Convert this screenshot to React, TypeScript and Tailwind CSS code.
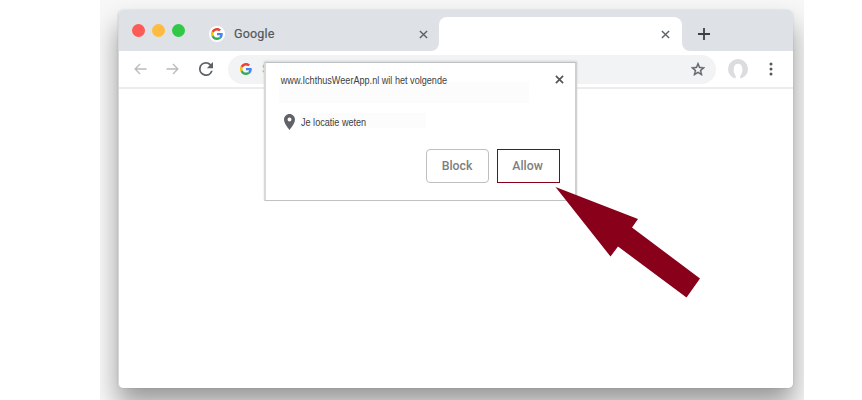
import React from "react";

function GoogleG({ className }: { className: string }) {
  return (
    <svg viewBox="0 0 48 48" className={className}>
      <path fill="#ea4335" d="M24 9.5c3.54 0 6.71 1.22 9.21 3.6l6.85-6.85C35.9 2.38 30.47 0 24 0 14.62 0 6.51 5.38 2.56 13.22l7.98 6.19C12.43 13.72 17.74 9.5 24 9.5z" />
      <path fill="#4285f4" d="M46.98 24.55c0-1.57-.15-3.09-.38-4.55H24v9.02h12.94c-.58 2.96-2.26 5.48-4.78 7.18l7.73 6c4.51-4.18 7.09-10.36 7.09-17.65z" />
      <path fill="#fbbc05" d="M10.53 28.59c-.48-1.45-.76-2.99-.76-4.59s.27-3.14.76-4.59l-7.98-6.19C.92 16.46 0 20.12 0 24s.92 7.54 2.56 10.78l7.97-6.19z" />
      <path fill="#34a853" d="M24 48c6.48 0 11.93-2.13 15.89-5.81l-7.73-6c-2.15 1.45-4.92 2.3-8.16 2.3-6.26 0-11.57-4.22-13.47-9.91l-7.98 6.19C6.51 42.62 14.62 48 24 48z" />
    </svg>
  );
}

function Cross({ className }: { className: string }) {
  return (
    <svg viewBox="0 0 10 10" className={className} fill="none" stroke="#5f6368" strokeWidth="1.6">
      <path d="M1 1 9 9M9 1 1 9" />
    </svg>
  );
}

function TabStrip() {
  return (
    <div className="flex h-[41px] bg-[#dee1e6] pl-[13px]">
      <div className="flex h-[41px] items-center gap-[7px]">
        <span className="size-[13px] rounded-full bg-[#fc5b57]" />
        <span className="size-[13px] rounded-full bg-[#fdbc40]" />
        <span className="size-[13px] rounded-full bg-[#33c748]" />
      </div>
      <div className="ml-[24px] flex h-[41px] w-[219px] items-center pt-[7px]">
        <span className="flex size-4 items-center justify-center rounded-full bg-white">
          <GoogleG className="size-3" />
        </span>
        <span className="ml-[9px] text-[12.5px] leading-4 tracking-[0.2px] text-[#53575b] [-webkit-text-stroke:0.2px_#53575b]">Google</span>
        <Cross className="ml-auto size-[9px]" />
      </div>
      <div className="relative ml-[11px] mt-[7px] flex h-[34px] w-[243px] items-center rounded-t-[8px] bg-white">
        <svg viewBox="0 0 8 8" className="absolute -left-2 bottom-0 size-2">
          <path d="M8 0v8H0a8 8 0 0 0 8-8z" fill="#fff" />
        </svg>
        <svg viewBox="0 0 8 8" className="absolute -right-2 bottom-0 size-2">
          <path d="M0 0v8h8a8 8 0 0 1-8-8z" fill="#fff" />
        </svg>
        <Cross className="ml-auto mr-[12px] size-[9px]" />
      </div>
      <svg viewBox="0 0 12 12" className="ml-[16px] mt-[18px] size-3" stroke="#3c4043" strokeWidth="1.8">
        <path d="M6 0v12M0 6h12" />
      </svg>
    </div>
  );
}

function Toolbar() {
  return (
    <div className="flex h-[38px] items-center border-b-2 border-[#ebecec] bg-white pl-[15px]">
      <svg viewBox="0 0 14 12" className="h-3 w-[13px]" fill="none" stroke="#b9bbbe" strokeWidth="1.4">
        <path d="M13.5 6H1.2M6.5.7 1.2 6l5.3 5.3" />
      </svg>
      <svg viewBox="0 0 14 12" className="ml-[19px] h-3 w-[13px]" fill="none" stroke="#b9bbbe" strokeWidth="1.4">
        <path d="M.5 6h12.3M7.5.7 12.8 6l-5.3 5.3" />
      </svg>
      <svg viewBox="4 4 16 16" className="ml-[20px] size-[14px]" fill="#5f6367">
        <path d="M17.65 6.35A7.96 7.96 0 0 0 12 4a8 8 0 1 0 7.73 10h-2.08A6 6 0 1 1 12 6c1.66 0 3.14.69 4.22 1.78L13 11h7V4l-2.35 2.35z" />
      </svg>
      <div className="ml-[15px] flex h-[29px] w-[488px] items-center rounded-full bg-[#f1f3f4] pl-[12px] pr-[11px]">
        <GoogleG className="size-3" />
        <span className="ml-[10px] text-xs text-[#b5b8bb]">S</span>
        <svg viewBox="2 2 20 19" className="ml-auto h-[14px] w-[14px]" fill="#5f6367" stroke="#5f6367" strokeWidth="0.5">
          <path d="m22 9.24-7.19-.62L12 2 9.19 8.63 2 9.24l5.46 4.73L5.82 21 12 17.27 18.18 21l-1.63-7.03L22 9.24zM12 15.4l-3.76 2.27 1-4.28-3.32-2.88 4.38-.38L12 6.1l1.71 4.04 4.38.38-3.32 2.88 1 4.28L12 15.4z" />
        </svg>
      </div>
      <svg viewBox="0 0 20 20" className="ml-[12px] size-5">
        <circle cx="10" cy="10" r="10" fill="#dadcdd" />
        <path d="M7.5 20c.5-2 .3-3-.6-4.500C5.500 13.500 5.500 12 5.800 9.500 6 6.500 7.500 4.700 10 4.700s4.100 1.800 4.300 4.800c.2 2.500.1 4-1.200 6-.9 1.500-1.100 2.500-.6 4.500z" fill="#fff" />
      </svg>
      <svg viewBox="0 0 4 14" className="ml-[21px] h-[14px] w-1" fill="#54585c">
        <circle cx="2" cy="2" r="1.500" />
        <circle cx="2" cy="7" r="1.500" />
        <circle cx="2" cy="12" r="1.500" />
      </svg>
    </div>
  );
}

function PermissionPrompt() {
  return (
    <div className="absolute left-[264px] top-[62px] flex h-[139px] w-[313px] flex-col border-b border-l-2 border-r-2 border-t border-b-[#c2c2c2] border-l-[#d9d9d9] border-r-[#d0d0d0] border-t-[#bfc1c2] bg-white shadow-[0_-1px_2px_rgba(0,0,0,0.12)]">
      <div className="flex h-[40px] pl-[13px] pt-[10px]">
        <div className="flex h-[30px] w-[250px] flex-col">
          <span className="relative z-10 h-[14px] w-max origin-left scale-x-[0.867] pl-[2px] text-[10.5px] leading-[14px] text-[#404040]">www.IchthusWeerApp.nl wil het volgende</span>
          <div className="-mt-[5px] h-[21px] bg-[#fcfcfc]" />
        </div>
        <svg viewBox="0 0 10 10" className="ml-[26px] mt-[2px] size-[9px]" fill="none" stroke="#53575c" strokeWidth="1.9">
          <path d="M1 1 9 9M9 1 1 9" />
        </svg>
      </div>
      <div className="mt-[11px] flex h-[16px] w-[160px] pl-[18px]">
        <svg viewBox="5 2 14 20" className="h-4 w-[11px] shrink-0" fill="#5f6367" preserveAspectRatio="none">
          <path d="M12 2C8.130 2 5 5.130 5 9c0 5.250 7 13 7 13s7-7.750 7-13c0-3.870-3.130-7-7-7zm0 9.500a2.500 2.500 0 1 1 0-5 2.500 2.500 0 0 1 0 5z" />
        </svg>
        <div className="-mt-px ml-[6px] h-[15px] w-[125px] shrink-0 bg-[#fcfcfc]">
          <span className="block w-max origin-left scale-x-[0.865] text-[10.5px] leading-[18px] text-[#404040]">Je locatie weten</span>
        </div>
      </div>
      <div className="ml-auto mr-[15px] mt-[19px] flex gap-2 font-['Roboto'] text-[12.3px] font-medium text-[#7c7e80]">
        <button className="h-[34px] w-[63px] rounded-[4px] border border-[#bfbfbf] pr-px">Block</button>
        <button className="h-[34px] w-[63px] border border-[#880019] pr-[2px]">Allow</button>
      </div>
    </div>
  );
}

export default function App() {
  return (
    <div className="relative h-[400px] w-[862px] overflow-hidden bg-white font-['Liberation_Sans',sans-serif]">
      <div className="ml-[100px] h-[400px] w-[704px] overflow-hidden bg-[#f7f7f7] pl-[18px] pt-[10px]">
        <div className="h-[378px] w-[675px] rounded-[5px] shadow-[0_16px_26px_0px_rgba(0,0,0,0.38),0_0_2px_rgba(0,0,0,0.15)]">
          <div className="h-[378px] overflow-hidden rounded-[5px] border-l border-[#d8d8d8] bg-white font-['Roboto',sans-serif]">
            <TabStrip />
            <Toolbar />
          </div>
        </div>
      </div>
      <PermissionPrompt />
      <svg viewBox="0 0 146 112" className="absolute left-[555px] top-[186px] h-[112px] w-[146px]" fill="#880019">
        <path d="M.500 1 83 33l-6 8.500L145 92.500 131.500 111.500 63 60.500 55.500 70.500z" />
      </svg>
    </div>
  );
}
